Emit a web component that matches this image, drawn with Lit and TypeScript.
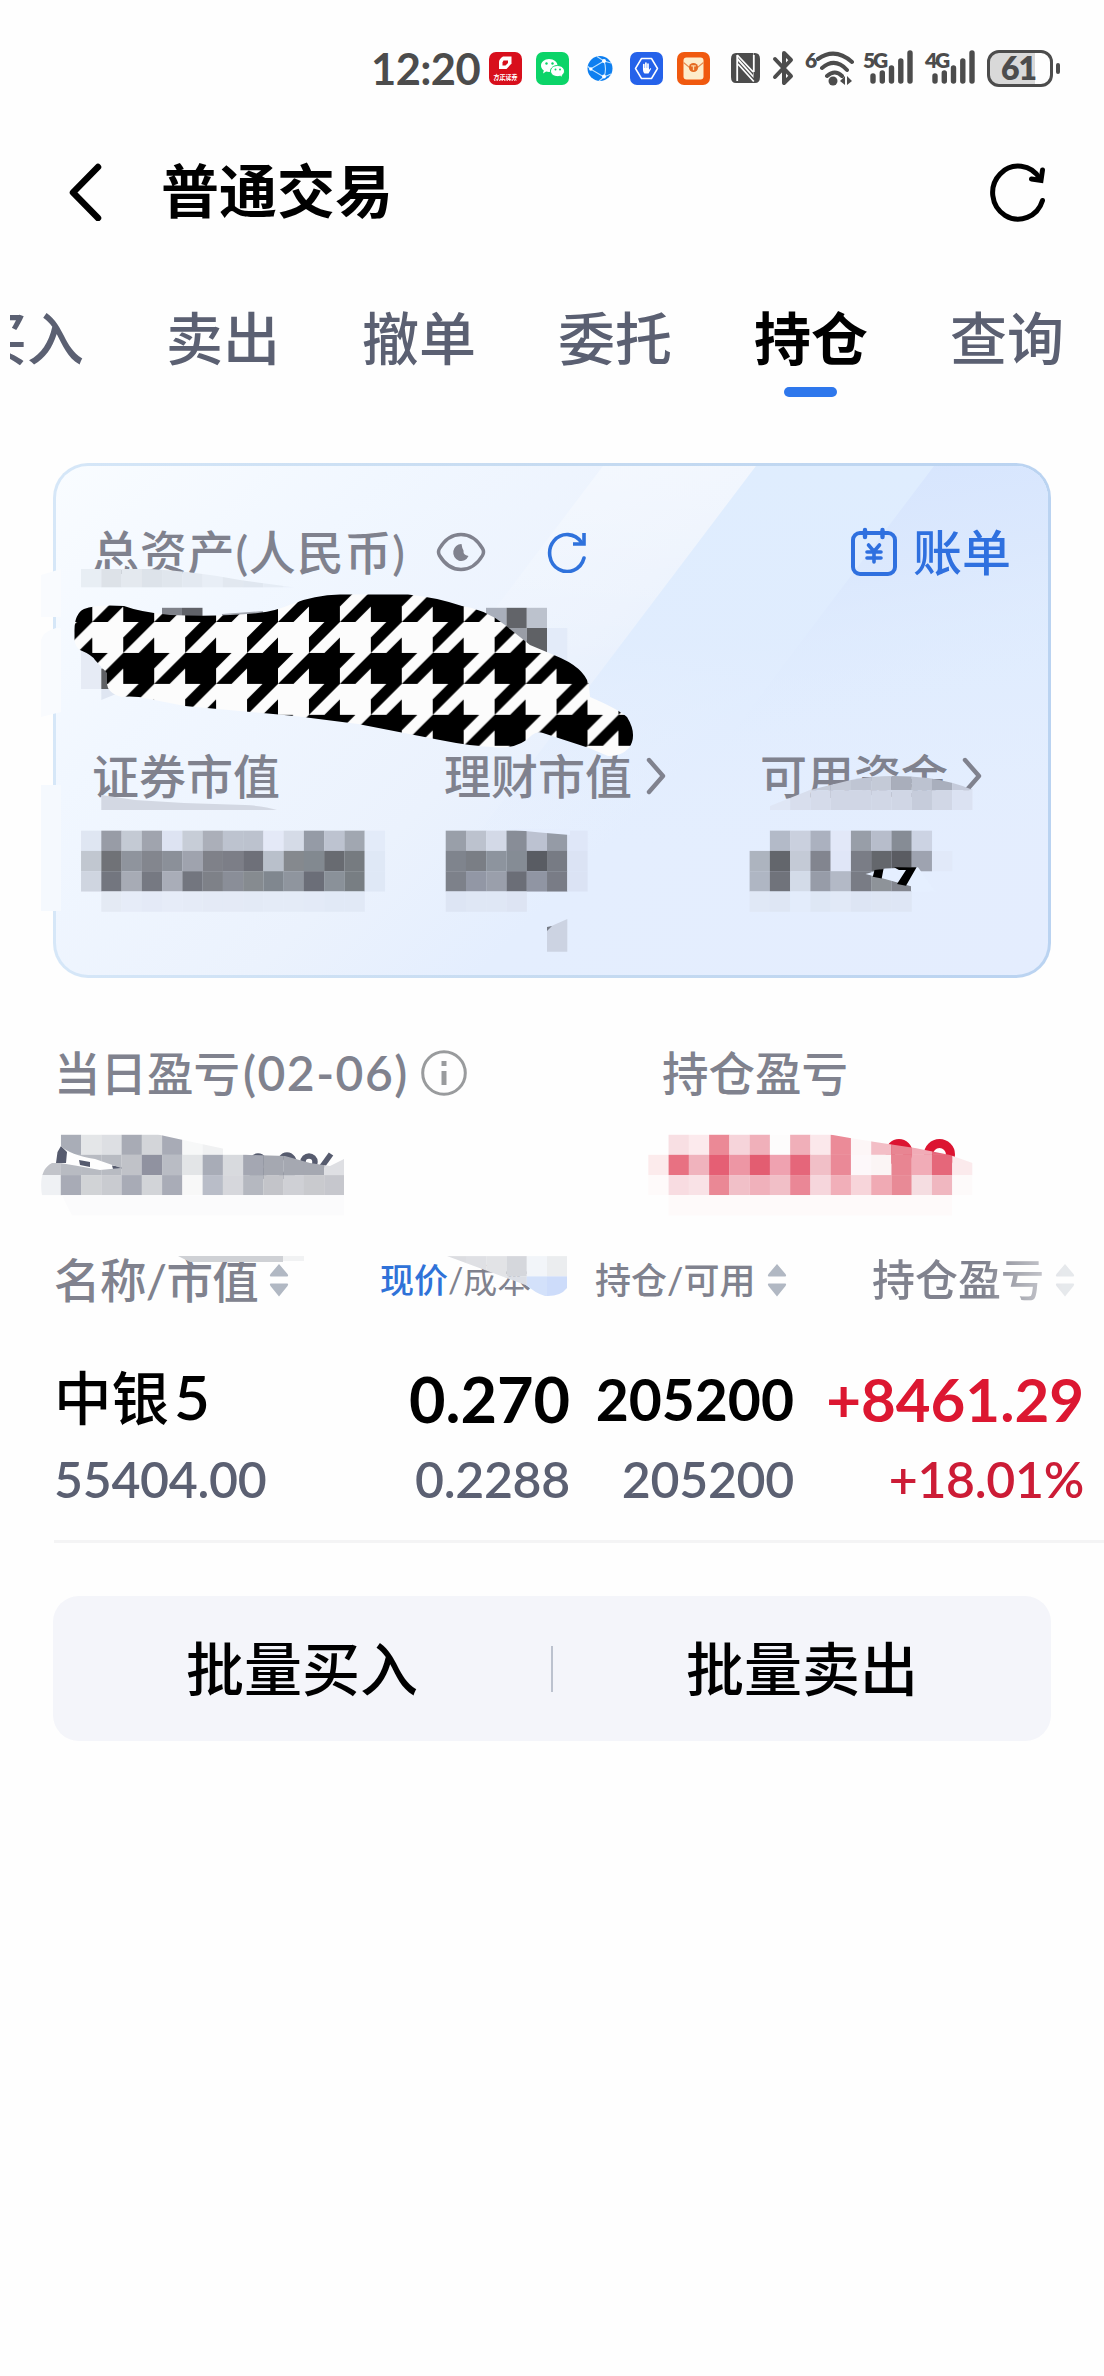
import { LitElement, html, svg, css } from "lit";
import { customElement } from "lit/decorators.js";

/* Side of one mosaic cell */
const CELL = 20.26;

type Strip = { col: number; row: number; fill: string };

const MOSAIC_CARD: Strip[] = [
  { col: 4, row: 41, fill: "dfe6f2 989ca6 c4cad4 a0a4ae dde3f2 c7cdd7 abafb9 bdc3cf bcc2ce e4e9f7 d5dbe7 959ba6 bdc3d0 a1a7b1 e3ebf9" },
  { col: 4, row: 42, fill: "c1c7d0 707277 8f949d 83868e 8b9099 9fa3ae 7f8189 7c7e87 6e7079 b9c0cb 85898e 828990 686b71 767b80 dfe8f6" },
  { col: 4, row: 43, fill: "cfd5e0 73767f a7abb5 767982 a9adb8 73767f 7e8188 8a8e98 868b90 80878f 8f959e 6b6e78 8a9199 787e83 dfe8f6" },
  { col: 5, row: 44, fill: "e4eaf4 e6ecf8 e4eaf7 e6ecf8 e5ebf7 e4eaf6 e4eaf6 e3eaf6 e4ebf7 e4ebf7 e3eaf7 e1e9f6 e1e9f6" },
  { col: 22, row: 41, fill: "999fa9 bcc2ce d3d9e7 888d97 bcc2d1 959ba6 dfe7f8" },
  { col: 22, row: 42, fill: "7f848d 7a7e85 8d949e 858c95 595c63 777b84 dbe3f4" },
  { col: 22, row: 43, fill: "7d818a 9297a5 9a9fab 6b6e77 9095a3 797c86 dbe3f4" },
  { col: 22, row: 44, fill: "dde5f4 dfe7f5 dfe7f5 dde4f3" },
  { col: 38, row: 41, fill: "b3bac8 cad0de abb1bf e2e8f8 989ea8 b7bdcb 868c95 ccd3e3" },
  { col: 37, row: 42, fill: "adb4bf 63666c c4cad6 82858f e0e6f7 7a7d86 64676c 5a5c62 9ea3b0 e1e9f9" },
  { col: 37, row: 43, fill: "afb6c3 70737b d3dbe8 979ca8 b3b9c6 797c85 8e9399 83868f" },
  { col: 37, row: 44, fill: "e0e8f6 dee6f4 e3ecfb dee7f5 e1e9f7 dde5f4 dee6f4 dee6f5" },
];

const MOSAIC_ARCH: Strip[] = [
  { col: 38, row: 38, fill: "c5cbd8 c5cbd8 c5cbd8 c5cbd8 bfc5d3 c4cad7 a9aebb bcc2d0 a9afbd c5cbdb d5dcec" },
  { col: 38, row: 39, fill: "dfe6f5 d8deed d5dbea d0d6e5 d0d6e5 d1d7e6 d0d6e5 c6ccdb d1d7e6 dbe2f2 e2eafa" },
];

const MOSAIC_AMOUNT: Strip[] = [
  { col: 4, row: 28, fill: "e8eef4 dde2e8 e4e9ef dde3ea e0e6ed e3e9f1 e8eef6 e2e8f0 e0e7f0 e5ecf5 eaf0fa" },
];

const MOSAIC_DAY: Strip[] = [
  { col: 3, row: 56, fill: "a9adb7 e4e6e8 dddfe3 a8abb5 d3d5d9 a8abb6 f7f8f8 f0f1f2" },
  { col: 2, row: 57, fill: "c2c4ca b8bbc2 b8bbc2 b8bbc2 c0c2c8 9092a0 b9bcc4 e3e5e7 a8acb7 d8dade a4a7b2 a5a8b1 a5a8b1 a5a8b1 dedfe3" },
  { col: 2, row: 58, fill: "eff1f4 a8abb6 d1d3d6 c9cbd0 a8abb6 d2d4d8 a9acb7 f8f8f8 b9bdc8 d6d7dc b5b8c0 c3c4c9 cfd0d5 c9cace c6c7cd" },
];

const MOSAIC_RED: Strip[] = [
  { col: 33, row: 56, fill: "f8dfe3 fceaed eb8996 f6d4da f0b0ba fdfcfc f0afb9 fbe8eb eb8b98 fdf6f7 f3bec6 e88592 f1acb7 e5677a" },
  { col: 32, row: 57, fill: "fcebec e87182 f0b3bd e55f74 ed96a4 e35d71 efa2b0 e5667a f1bfc7 ea8997 fdf8fa fbf5f5 e88592 f1acb7 e5677a fbeaec" },
  { col: 32, row: 58, fill: "fefafa f8dce1 f9e2e6 ea8895 f1c0c8 f0b1bb f1bfc7 ea8796 f6d6dc f1afb9 f7d5da f0aab4 e88a96 f5dde1 f0b7c0 fdfafa" },
];

const MOSAIC_HEAD: Strip[] = [
  { col: 22, row: 62, fill: "dcdde1 dfe0e4 e2e3e6 d5d7dc f2f5f9 ebedef" },
  { col: 22, row: 63, fill: "dcdde1 dfe0e4 dcdde3 dcdfe6 d3e1fa cddcfa" },
];

const mosaic = (strips: Strip[]) =>
  strips.map((s) =>
    s.fill
      .split(" ")
      .map(
        (f, i) => svg`<rect x=${(s.col + i) * CELL} y=${s.row * CELL} width=${CELL + 0.1} height=${CELL + 0.1} fill=${"#" + f} />`
      )
  );

const sorter = html`<svg class="sort" width="20" height="34" viewBox="0 0 20 34">
  <path d="M10 1 L18.500 11 Q20 13.500 18 13.500 H2 Q0 13.500 1.500 11 Z M10 33.500 L18.500 23 Q20 20.500 18 20.500 H2 Q0 20.500 1.500 23 Z" fill="#b1b8c3" />
</svg>`;

const chevron = html`<svg class="chev" width="20" height="38" viewBox="0 0 20 38">
  <path d="M3 3 L17 19 L3 35" fill="none" stroke="#80828e" stroke-width="4.400" stroke-linecap="round" stroke-linejoin="round" />
</svg>`;

const signal = html`<svg width="43" height="34" viewBox="0 0 43 34">
  <path d="M3 26V31M12.300 23V31M21.500 18V31M30.800 11V31M40 3V31" stroke="#4c4c4c" stroke-width="5.400" stroke-linecap="round" />
</svg>`;

@customElement("app-root")
export class AppRoot extends LitElement {
  static styles = css`
    :host {
      display: block;
      position: relative;
      width: 1104px;
      height: 2376px;
      overflow: hidden;
      background: #fefefe;
      font-family: Lato, "Noto Sans CJK SC", sans-serif;
      font-weight: 500;
      color: #000;
      white-space: nowrap;
    }
    svg { display: block; flex: none; }
    .status {
      display: flex;
      align-items: center;
      height: 136px;
      padding-left: 371px;
      color: #4c4c4c;
      font-weight: 700;
    }
    .clock { width: 118px; font-size: 43.5px; font-weight: 700; line-height: 60px; letter-spacing: -0.6px; }
    .apps { display: flex; gap: 14px; width: 241px; }
    .nfc { margin-right: 11px; }
    .bt { margin-right: 10px; }
    .net { display: flex; align-items: flex-start; height: 36px; }
    .tag { font-size: 21px; line-height: 19px; font-weight: 800; letter-spacing: -2.2px; }
    .wifi { width: 58px; }
    .wifi .tag { width: 10px; }
    .cell { width: 62px; }
    .cell svg { margin-left: -18px; }
    .cell .tag { width: 25px; }
    .battery {
      display: flex;
      align-items: center;
      justify-content: center;
      box-sizing: border-box;
      width: 66px;
      height: 37px;
      border: 3px solid #4c4c4c;
      border-radius: 12px;
      background: linear-gradient(90deg, #d9d9d9 75%, #fefefe 75%);
      font-size: 32px;
      font-weight: 800;
      line-height: 30px;
      letter-spacing: -1px;
      padding-right: 3px;
    }
    .nub { width: 4px; height: 11px; border-radius: 2px; background: #4c4c4c; margin-left: 3px; }
    .header { display: flex; align-items: center; height: 112px; padding: 0 55px 0 67px; }
    .title { flex: 1; margin: -2px 0 0 59px; font-size: 58px; font-weight: 700; line-height: 80px; }
    .tabs {
      display: flex;
      justify-content: flex-end;
      align-items: center;
      height: 180px;
      margin-left: 10px;
      padding-right: 40px;
      gap: 82px;
      overflow: hidden;
      color: #5b6072;
      font-size: 57px;
      line-height: 80px;
    }
    .tab { position: relative; flex: none; }
    .tab.active { color: #000; font-weight: 700; }
    .tab.active::after {
      content: "";
      position: absolute;
      left: 30px;
      top: 89px;
      width: 53px;
      height: 10px;
      border-radius: 5px;
      background: #2e77ec;
    }
    .card {
      position: relative;
      display: flex;
      flex-direction: column;
      box-sizing: border-box;
      height: 515px;
      margin: 35px 53px 0 53px;
      padding: 56px 37px 0 36px;
      border: 3px solid transparent;
      border-radius: 35px;
      background:
        linear-gradient(135deg, #f9fcff 0%, #f1f7ff 22%, #ebf2fd 47%, #e4eefe 62%, #e4edfe 100%) padding-box,
        linear-gradient(90deg, #d6e7f8, #c6dbf1 50%, #bad3f1) border-box;
      color: #80828e;
      font-size: 47px;
      line-height: 60px;
    }
    .sheen { position: absolute; left: 0; top: 0; border-radius: 32px; }
    .assets, .funds { position: relative; }
    .assets { display: flex; align-items: center; height: 60px; }
    .caption { letter-spacing: 0.8px; }
    .eye { margin: 0 61px 0 30px; }
    .bill { display: flex; align-items: center; margin-left: auto; gap: 16px; color: #2f70df; font-size: 49px; }
    .amount { height: 164px; }
    .funds { display: grid; grid-template-columns: 352px 316px 1fr; }
    .fund { display: flex; align-items: center; gap: 14px; }
    .profit { display: grid; grid-template-columns: 608px 1fr; margin: 65px 0 0 54px; height: 60px; color: #80828e; font-size: 46.5px; line-height: 60px; }
    .day { display: flex; align-items: center; }
    .date { font-size: 48px; font-weight: 600; letter-spacing: 1.5px; margin: 0 12px 0 3px; }
    .thead {
      display: grid;
      grid-template-columns: 326px 215px 277px 1fr;
      align-items: center;
      height: 60px;
      margin: 147px 0 0 54px;
      color: #80828e;
      font-size: 46.5px;
      line-height: 60px;
    }
    .th { display: flex; align-items: center; gap: 11px; }
    .th.n { letter-spacing: -0.6px; }
    .th.s { font-size: 34px; font-weight: 400; gap: 0; }
    .th.m { font-size: 36px; gap: 12px; }
    .th.l {
      font-size: 43px;
      -webkit-mask-image: linear-gradient(90deg, #000 110px, rgba(0, 0, 0, 0.3) 190px);
      mask-image: linear-gradient(90deg, #000 110px, rgba(0, 0, 0, 0.3) 190px);
    }
    .price { color: #2f72d8; font-weight: 500; }
    .holding {
      display: grid;
      grid-template-columns: 250px 266px 224px 290px;
      grid-template-rows: 80px 80px;
      align-items: center;
      height: 160px;
      margin: 49px 0 0 54px;
      padding-bottom: 21px;
      border-bottom: 3px solid #f4f4f5;
      font-weight: 700;
      text-align: right;
      line-height: 80px;
    }
    .name { text-align: left; font-size: 57.5px; font-weight: 500; margin-top: -3px; }
    .five { font-size: 62px; font-weight: 600; line-height: 60px; margin-left: 5px; }
    .last { font-size: 63px; }
    .qty { font-size: 57px; }
    .gain { font-size: 60px; color: #dc1731; }
    .sub { font-size: 50px; font-weight: 600; color: #5b6072; letter-spacing: -0.3px; }
    .sub.first { text-align: left; }
    .sub.pct { color: #cc1c36; }
    .actions {
      display: flex;
      align-items: center;
      height: 145px;
      margin: 53px 53px 0;
      border-radius: 26px;
      background: #f4f5fa;
      font-size: 58px;
      font-weight: 500;
      line-height: 80px;
    }
    .action { flex: 1; text-align: center; }
    .bar { width: 2px; height: 46px; background: #bcc2ce; }
    .overlay { position: absolute; left: 0; top: 0; pointer-events: none; }
  `;

  render() {
    return html`
      <div class="status">
        <div class="clock">12:20</div>
        <div class="apps">
          <svg width="33" height="33" viewBox="0 0 33 33">
            <rect width="33" height="33" rx="7" fill="#d80f1c" />
            <path d="M14 4.500H22.500V11.500L17.500 17H10V10Q10 7 14 4.500Z" fill="#fff" /><path d="M14.500 8.500H19V11L16.500 13.500H13.500V10.500Z" fill="#d80f1c" />
            <text x="16.500" y="26.500" text-anchor="middle" font-size="6" font-weight="700" fill="#fff">方正证券</text>
            <path d="M5 28.500H28" stroke="#fff" stroke-width="1" stroke-dasharray="1.500 1" opacity=".7" />
          </svg>
          <svg width="33" height="33" viewBox="0 0 33 33">
            <rect width="33" height="33" rx="7" fill="#0bd468" />
            <path d="M13 7c5 0 8.500 3 8.500 6.600S18 20 13 20c-1 0-2-.1-2.900-.4L7 21.400l.8-2.900C6 17.300 5 15.600 5 13.600 5 10 8.500 7 13 7z" fill="#fff" />
            <circle cx="10.500" cy="11.500" r="1.200" fill="#0bd468" /><circle cx="16.500" cy="11.500" r="1.200" fill="#0bd468" />
            <path d="M21.500 13.500c4 0 7 2.500 7 5.600 0 1.700-.9 3.200-2.300 4.200l.6 2.300-2.600-1.400c-.9.300-1.700.4-2.700.4-4 0-7-2.400-7-5.500s3-5.600 7-5.600z" fill="#fff" stroke="#0bd468" stroke-width="1" />
            <circle cx="19.500" cy="17.500" r="1" fill="#0bd468" /><circle cx="24" cy="17.500" r="1" fill="#0bd468" />
          </svg>
          <svg width="33" height="33" viewBox="0 0 33 33">
            <circle cx="17" cy="16.500" r="12.500" fill="#0e7ff0" />
            <path d="M21 9L7.500 17L21 25Q24 17 21 9ZM14 4.500L21 9L28 11M7.500 17L4.500 14M21 25L28 22M21 25L16 29" fill="none" stroke="#bfe3ff" stroke-width="1.100" />
            <circle cx="21" cy="9" r="2" fill="#fff" /><circle cx="7.800" cy="17" r="1.700" fill="#fff" /><circle cx="21" cy="24.500" r="2" fill="#fff" />
          </svg>
          <svg width="33" height="33" viewBox="0 0 33 33">
            <rect width="33" height="33" rx="7" fill="#2562ea" />
            <path d="M11.500 6.500h10l6 10-6 10h-10l-6-10z" fill="none" stroke="#fff" stroke-width="1.500" stroke-linejoin="round" />
            <path d="M13.800 12.500v5M15.900 11v7M18 12v6" stroke="#fff" stroke-width="1.700" stroke-linecap="round" />
            <path d="M13 16H18.800V18L20.600 16L21.200 16.800L18.500 21.500H14.500Q13 20 13 18Z" fill="#fff" />
          </svg>
          <svg width="33" height="33" viewBox="0 0 33 33">
            <rect width="33" height="33" rx="7" fill="#f0590f" />
            <rect x="6.500" y="5.500" width="20" height="22" rx="3" fill="#fdeccb" />
            <path d="M6.500 10.500L12.500 15.500H20.500L26.500 10.500" fill="none" stroke="#e88a50" stroke-width="1.200" />
            <circle cx="16.500" cy="15.500" r="4.600" fill="#e56a22" />
            <path d="M14.200 13.800H18.800M16.500 13.800V18.200" stroke="#fdd9a8" stroke-width="1.300" />
          </svg>
        </div>
        <svg class="nfc" width="31" height="32" viewBox="0 0 31 32">
          <path d="M6 1Q1 1 1 7V25Q1 31 6 31H8V6L23 23V1Z" fill="#4c4c4c" />
          <path d="M25 31Q30 31 30 25V7Q30 1 25 1H23.500V26L8 9V31Z" fill="#4c4c4c" />
          <path d="M7.200 3V29M7.200 3L23.200 20M8 12L23.800 29.500M23.800 3V20" stroke="#fefefe" stroke-width="1.800" fill="none" />
        </svg>
        <svg class="bt" width="23" height="36" viewBox="0 0 23 36">
          <path d="M3 9L19 26L12 33V3L19 10L3 27" fill="none" stroke="#4c4c4c" stroke-width="4" stroke-linejoin="round" stroke-linecap="round" />
        </svg>
        <div class="net wifi">
          <span class="tag">6</span>
          <svg width="40" height="36" viewBox="0 0 40 36">
            <path d="M3 9Q20 -3 37 12M7 18Q20 7 32 20M12 26Q20 19 27 26" fill="none" stroke="#4c4c4c" stroke-width="4" stroke-linecap="round" />
            <circle cx="18" cy="31" r="4.500" fill="#4c4c4c" />
            <path d="M30 26V35L25 31ZM32 35V26L37 31Z" fill="#4c4c4c" />
          </svg>
        </div>
        <div class="net cell"><span class="tag">5G</span>${signal}</div>
        <div class="net cell"><span class="tag">4G</span>${signal}</div>
        <div class="battery">61</div>
        <div class="nub"></div>
      </div>

      <div class="header">
        <svg width="35" height="58" viewBox="0 0 35 58">
          <path d="M31 4L6 29.500L31 55" fill="none" stroke="#000" stroke-width="6.500" stroke-linecap="round" stroke-linejoin="round" />
        </svg>
        <h1 class="title">普通交易</h1>
        <svg width="60" height="60" viewBox="0 0 60 60">
          <path d="M53.500 38.500A25.500 26.500 0 1 1 51 17" fill="none" stroke="#000" stroke-width="5" stroke-linecap="round" />
          <path d="M53.500 8L52 18.500L42.500 17" fill="none" stroke="#000" stroke-width="5" stroke-linecap="round" stroke-linejoin="miter" />
        </svg>
      </div>

      <div class="tabs">
        ${["买入", "卖出", "撤单", "委托", "持仓", "查询"].map(
          (t) => html`<div class="tab ${t === "持仓" ? "active" : ""}">${t}</div>`
        )}
      </div>

      <div class="card">
        <svg class="sheen" width="992" height="509" viewBox="0 0 992 509">
          <defs>
            <linearGradient id="s1" x1="0" y1="0" x2="0" y2="1">
              <stop offset="0" stop-color="#dfedfe" />
              <stop offset=".35" stop-color="#dfecfe" stop-opacity=".9" />
              <stop offset=".75" stop-color="#e2edfe" stop-opacity="0" />
            </linearGradient>
            <linearGradient id="s2" x1="0" y1="0" x2=".15" y2="1">
              <stop offset="0" stop-color="#d5e4fe" />
              <stop offset=".3" stop-color="#dbe8fd" stop-opacity=".9" />
              <stop offset=".62" stop-color="#e2edfe" stop-opacity="0" />
            </linearGradient>
            <linearGradient id="s0" x1="0" y1="0" x2="0" y2="1">
              <stop offset="0" stop-color="#fff" stop-opacity=".35" />
              <stop offset=".4" stop-color="#fff" stop-opacity="0" />
            </linearGradient>
          </defs>
          <path d="M547 0H700L316 509H162Z" fill="url(#s0)" />
          <path d="M700 0H992V509H315Z" fill="url(#s1)" />
          <path d="M878 0H992V509H493Z" fill="url(#s2)" />
        </svg>
        <div class="assets">
          <span class="caption">总资产(人民币)</span>
          <svg class="eye" width="50" height="40" viewBox="0 0 50 40">
            <path d="M25 2.500C35 2.500 42 9 46.500 16.500Q48.500 20 46.500 23.500C42 31 35 37.500 25 37.500S8 31 3.500 23.500Q1.500 20 3.500 16.500C8 9 15 2.500 25 2.500Z" fill="none" stroke="#80828e" stroke-width="3.500" />
            <path d="M25.500 12A8 8.500 0 1 0 32.500 24Q27 23 27.500 18.500Q26 16 25.500 12Z" fill="#80828e" />
          </svg>
          <svg width="40" height="42" viewBox="0 0 40 42">
            <path d="M37 27A17.500 18.500 0 1 1 34.500 11.500" fill="none" stroke="#2f72dc" stroke-width="3.600" stroke-linecap="round" />
            <path d="M37 2V13H26" fill="none" stroke="#2f72dc" stroke-width="3.600" />
          </svg>
          <div class="bill">
            <svg width="46" height="50" viewBox="0 0 46 50">
              <rect x="2" y="6" width="42" height="41" rx="7" fill="none" stroke="#2f70df" stroke-width="4" />
              <path d="M14 3V10M31.500 3V10" stroke="#2f70df" stroke-width="4.400" stroke-linecap="round" />
              <path d="M17.500 18L23 24.500L28.500 18M23 24.500V35M16 25H30M16 31H30" fill="none" stroke="#2f70df" stroke-width="3.600" stroke-linecap="round" />
            </svg>
            <span>账单</span>
          </div>
        </div>
        <div class="amount"></div>
        <div class="funds">
          <div class="fund">证券市值</div>
          <div class="fund">理财市值${chevron}</div>
          <div class="fund">可用资金${chevron}</div>
        </div>
      </div>

      <div class="profit">
        <div class="day">
          <span>当日盈亏</span><span class="date">(02-06)</span>
          <svg width="46" height="46" viewBox="0 0 46 46">
            <circle cx="23" cy="23" r="21.300" fill="none" stroke="#999b9d" stroke-width="3" />
            <path d="M23 21V35M23 11V16" stroke="#999b9d" stroke-width="5" />
          </svg>
        </div>
        <div>持仓盈亏</div>
      </div>

      <div class="thead">
        <div class="th n">名称/市值${sorter}</div>
        <div class="th s"><span class="price">现价</span>/成本</div>
        <div class="th m">持仓/可用${sorter}</div>
        <div class="th l">持仓盈亏${sorter}</div>
      </div>

      <div class="holding">
        <div class="name">中银<span class="five">5</span></div>
        <div class="last">0.270</div>
        <div class="qty">205200</div>
        <div class="gain">+8461.29</div>
        <div class="sub first">55404.00</div>
        <div class="sub">0.2288</div>
        <div class="sub">205200</div>
        <div class="sub pct">+18.01%</div>
      </div>

      <div class="actions">
        <div class="action">批量买入</div>
        <div class="bar"></div>
        <div class="action">批量卖出</div>
      </div>

      <svg class="overlay" width="1104" height="2376" viewBox="0 0 1104 2376">
        <defs>
          <pattern id="hound" x="92.300" y="622" width="61.900" height="61.900" patternUnits="userSpaceOnUse" viewBox="0 0 62 62">
            <rect width="62" height="62" fill="#fcfcfc" />
            <path d="M31 31H62V62H31ZM46.500 0H62L31 31V15.500ZM62 15.500V31H46.500ZM0 31H15.500L0 46.500ZM31 31V46.500L15.500 62H0Z" fill="#000" />
          </pattern>
          <clipPath id="archClip"><path d="M770 810V806L810 790L851 780Q885 773 928 778Q955 782 973 790V810Z" /></clipPath>
          <clipPath id="amountClip"><path d="M81 587.500V569H150Q200 572 240 580L295 587.500Z" /></clipPath>
          <clipPath id="dayClip">
            <path d="M60.800 1134.600H158L183 1140L225 1149L250 1155L285 1156L310 1163L330 1166L344 1159V1195.300H42Q38 1170 52 1163L60 1163L78 1166L100 1170L121 1168L95 1159Q70 1155 60.800 1146Z" />
          </clipPath>
          <clipPath id="redClip"><path d="M648 1134.600H830L850 1138L875 1142L915 1148L950 1155L972.500 1163V1195.300H648Z" /></clipPath>
          <clipPath id="headClip"><path d="M447 1256H567V1288Q560 1297 545 1296Q535 1293 528 1286Z" /></clipPath>
        </defs>

        <path d="M41 575L61 569V617H41ZM41 640Q44 631 56 628H61V712L41 717Z" fill="#f9fbfe" />
        <path d="M41 785H61V911H41Z" fill="#f5f9fe" />
        <g clip-path="url(#amountClip)">${mosaic(MOSAIC_AMOUNT)}</g>
        <path d="M162 607.800H182V616H162Z" fill="#7f828a" />
        <path d="M182 607.800H202.500V616H182Z" fill="#606268" />
        <path d="M222 614L263 611V616H222Z" fill="#a5a9b2" />
        <path d="M486 607.800H506.500V628H486Z" fill="#a9afbb" />
        <path d="M506.500 607.800H526.800V628H506.500Z" fill="#626469" />
        <path d="M526.800 607.800H547V628H526.800Z" fill="#bcc2cd" />
        <path d="M506.500 628H526.800V650H506.500Z" fill="#999da6" />
        <path d="M526.800 628H547V655H526.800Z" fill="#5f6165" />
        <path d="M547 628H567.300V664H547Z" fill="#e3ebf9" />
        <path d="M81 650H101.300V689H81Z" fill="#e6ebf5" />
        <path d="M101.300 668.600H112V689H101.300Z" fill="#5f6165" />
        <path d="M101.300 689H116V694L101.300 700Z" fill="#dfe6f2" />
        <path
          d="M74.500 632Q74 614 84 609Q96 604 124 606Q140 612 170 615Q220 617 258 613Q276 611 292 604Q314 595 340 594.500H408Q435 597 462 606Q485 609 505 625L530 645L555 655.500Q584 667 589 685L590 697Q618 709 627 717Q638 735 629 748Q620 757 608 756L589 748L543 733Q537 731 532 735Q518 750 492 747Q470 746 440 740L358 724L295 716L185 706L139 697Q128 696 122 697Q107 693 107 683V673L95 660Q92 655 80 650Q75 646 74.500 640Z"
          fill="url(#hound)"
        />
        <path d="M101.300 795L135 800L184 803L245 805Q265 806 277 810H101.300Z" fill="#d3d8e3" />
        <g clip-path="url(#archClip)">${mosaic(MOSAIC_ARCH)}</g>
        ${mosaic(MOSAIC_CARD)}
        <path d="M506 829H570V835L540 832.500Z" fill="#e5eefe" />
        <path d="M547 928L567.300 919V951.700H547Z" fill="#ccd3e2" />
        <path d="M547 927L552 926L547 931Z" fill="#777c86" />
        <path d="M865.500 874L885 868.500L918 867.300L936 892L910 886L885 879Z" fill="#e5efff" />
        <path d="M911 885L932 891.500H911Z" fill="#e5efff" />
        <path d="M874.500 870L883.500 869L881.700 878.500L872.800 876.700ZM894 867.300H916.600L906 885.700L897 884L906 870H899Z" fill="#000" />

        <g fill="none" stroke="#565b6e" stroke-width="5.500">
          <ellipse cx="258" cy="1167" rx="8" ry="11" />
          <ellipse cx="287" cy="1166" rx="8" ry="11" />
          <circle cx="309" cy="1162" r="6" />
          <path d="M331 1154L318 1172" />
        </g>
        <path d="M56 1163L57.500 1152L61 1146L67 1152L66 1163ZM79 1160L90 1162V1167L80 1165ZM112 1165.500L122 1167V1169H113Z" fill="#565b6e" />
        <g clip-path="url(#dayClip)">${mosaic(MOSAIC_DAY)}</g>
        <path d="M62 1195.300H344V1215.500H72Z" fill="#fbfbfc" />

        <g fill="none" stroke="#dc1431" stroke-width="9">
          <circle cx="899" cy="1152.500" r="9" />
          <circle cx="939.500" cy="1154.500" r="11" />
        </g>
        <path d="M880 1166H960V1185H880Z" fill="#fefefe" />
        <g clip-path="url(#redClip)">${mosaic(MOSAIC_RED)}</g>
        <path d="M668.500 1195.300H952V1215.500H668.500Z" fill="#fefafa" />

        <path d="M178 1256H283V1262H190Z" fill="#cfd1d5" />
        <path d="M283 1256H304V1261H283Z" fill="#f1f2f3" />
        <g clip-path="url(#headClip)">${mosaic(MOSAIC_HEAD)}</g>
      </svg>
    `;
  }
}
